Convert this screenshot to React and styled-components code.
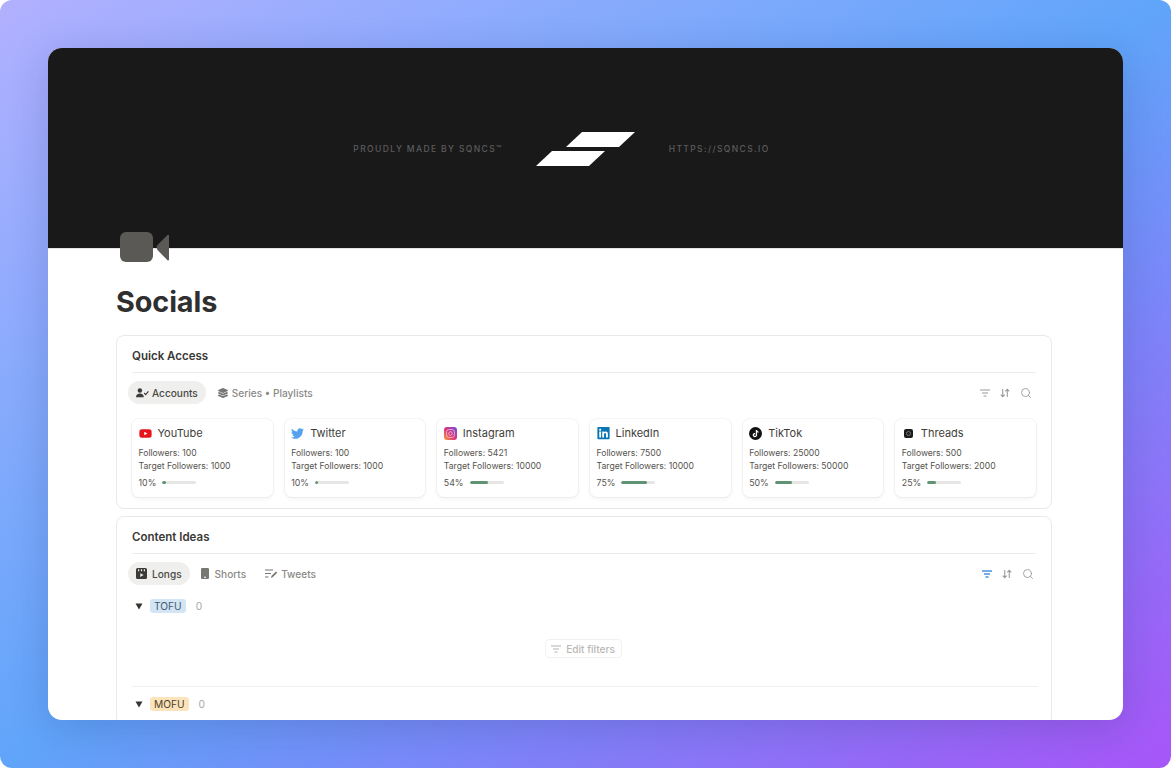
import React from "react";
import styled, { createGlobalStyle } from "styled-components";
import { FaYoutube, FaTwitter, FaLinkedin, FaLayerGroup } from "react-icons/fa";
import { Search } from "lucide-react";

const Global = createGlobalStyle`
  html, body { margin: 0; padding: 0; background: #fff; }
  * { box-sizing: border-box; }
  body { font-family: Inter, "Noto Sans", sans-serif; color: #37352f; }
`;

const Backdrop = styled.div`
  width: 1171px; height: 768px; padding: 48px; border-radius: 12px; overflow: hidden;
  background: linear-gradient(to bottom right, #b2b0ff 0%, #60a5fa 50%, #a855f7 100%);
`;
const Window = styled.main`
  width: 1075px; height: 672px; background: #fff; border-radius: 14px; overflow: hidden;
  box-shadow: 0 8px 40px rgba(30, 30, 90, .18);
`;
const Banner = styled.header`
  height: 201px; background: #191919; display: flex; align-items: center; justify-content: center; gap: 33px;
  padding: 2px 48px 0 0; border-bottom: 1px solid #e4e4e4;
`;
const BannerText = styled.span`
  font-size: 8.5px; letter-spacing: 1.38px; color: #5c5c5c; font-weight: 500; white-space: nowrap;
`;
const BannerLogo = styled.svg`
  display: block; width: 100px; height: 35px; flex: none;
`;
const Body = styled.div`
  padding: 0 71px 0 68px;
`;
const PageIcon = styled.svg`
  display: block; width: 50px; height: 32px; margin: -17px 0 0 4px; position: relative;
`;
const Title = styled.h1`
  margin: 20px 0 15px; font-size: 28.8px; line-height: 36px; font-weight: 700; color: #2f2f2f; letter-spacing: -.1px;
`;
const Panel = styled.section`
  border: 1px solid #e9e9e7; border-radius: 8px; padding: 0 15px 11px; margin-bottom: 7px; background: #fff;
`;
const PanelTitle = styled.h2`
  margin: 0; height: 37px; border-bottom: 1px solid #ebebea; display: flex; align-items: center; padding: 3px 0 0 0;
  font-size: 11.5px; font-weight: 600; color: #3a3936;
`;
const TabBar = styled.div`
  display: flex; align-items: center; justify-content: space-between; height: 23px; margin: 8px 0 0 -4px;
`;
const Tabs = styled.div`
  display: flex; align-items: center; gap: ${p => p.$gap}px;
`;
const Tab = styled.div`
  display: flex; align-items: center; gap: ${p => p.$iconGap || 4}px; height: 23px; padding: 0 8px; border-radius: 12px;
  font-size: 10.1px; font-weight: 500; color: ${p => p.$active ? "#4a4945" : "#8b8a86"};
  background: ${p => p.$active ? "#efefee" : "transparent"}; white-space: nowrap;
  svg { flex: none; color: ${p => p.$active ? "#3c3b37" : "#777672"}; }
`;
const Tools = styled.div`
  display: flex; align-items: center; gap: 10px; margin-right: ${p => p.$right}px; color: #9b9a97;
`;
const Cards = styled.div`
  display: grid; grid-template-columns: repeat(6, 1fr); gap: 12px; margin-top: 15px;
`;
const Card = styled.article`
  height: 78px; border-radius: 7px; background: #fff; padding: 6px 6.5px 0;
  box-shadow: 0 0 0 1px rgba(15, 15, 15, .04), 0 2px 4px rgba(15, 15, 15, .05);
`;
const CardHead = styled.div`
  display: flex; align-items: center; gap: 6px; height: 16px; font-size: 11px; font-weight: 400; color: #3f3e3a;
`;
const LogoBox = styled.span`
  width: 13px; height: 13px; display: flex; align-items: center; justify-content: center; flex: none;
`;
const Stats = styled.div`
  margin-top: 6px;
`;
const Stat = styled.div`
  font-size: 8.65px; line-height: 13px; color: #55534e; white-space: nowrap;
`;
const ProgressRow = styled.div`
  display: flex; align-items: center; gap: 6px; margin-top: 3px; height: 13px; font-size: 8.8px; color: #55534e;
`;
const Track = styled.div`
  width: 34px; height: 3px; border-radius: 2px; background: #e6e6e4; overflow: hidden;
`;
const Fill = styled.div`
  height: 100%; background: #5f9373; border-radius: 2px;
`;
const GroupRow = styled.div`
  display: flex; align-items: center; height: 20px; margin: ${p => p.$top}px 0 0 3px; font-size: 10.2px;
`;
const Caret = styled.svg`
  width: 8px; height: 7px; margin-right: 7px; flex: none;
`;
const Tag = styled.span`
  background: ${p => p.$bg}; color: ${p => p.$fg}; border-radius: 3px; padding: 0 4px; height: 14px; line-height: 14px;
  font-size: 10.2px; font-weight: 400;
`;
const Count = styled.span`
  margin-left: 10px; color: #a9a8a5; font-size: 10.2px;
`;
const EmptyState = styled.div`
  display: flex; justify-content: center; padding: 23px 0 28px; border-bottom: 1px solid #f0f0ef; margin-right: -2px;
`;
const EditFilters = styled.div`
  display: flex; align-items: center; gap: 5px; height: 19px; padding: 0 6px 0 5px; margin-left: -3px; border: 1px solid #f2f2f1; border-radius: 4px;
  font-size: 10.1px; color: #b9b8b5; font-weight: 500; svg { color: #b5b4b1; }
`;

const FilterIcon = ({ color = "currentColor", weight = 1.15 }) => (
  <svg width="10" height="8" viewBox="0 0 10 8" fill="none" stroke={color} strokeWidth={weight}>
    <path d="M0 1h10M2 4h6M3.500 7h3" />
  </svg>
);
const SortIcon = () => (
  <svg width="10" height="10" viewBox="0 0 11 10" fill="none" stroke="currentColor" strokeWidth="1.200">
    <path d="M3 .5v8.500M.8 6.800 3 9l2.200-2.200M8 9.500V1M5.800 3.200 8 1l2.200 2.200" />
  </svg>
);
const Tooling = ({ active, right }) => (
  <Tools $right={right}>
    <FilterIcon color={active ? "#4a90e2" : "currentColor"} weight={active ? 1.5 : 1.15} />
    <SortIcon />
    <Search size={12} strokeWidth={1.8} />
  </Tools>
);

const AccountsIcon = () => (
  <svg width="13" height="10" viewBox="0 0 14 10" fill="currentColor">
    <circle cx="4.200" cy="2.400" r="2.400" />
    <path d="M0 9.500C0 7 1.800 5.600 4.200 5.600S8.400 7 8.400 9.500z" />
    <path d="m8.800 5 1.600 1.700L13.400 3.300" fill="none" stroke="currentColor" strokeWidth="1.200" />
  </svg>
);
const ClapperIcon = () => (
  <svg width="11" height="11" viewBox="0 0 11 11" fill="currentColor">
    <path fillRule="evenodd" d="M1.500 0h8A1.500 1.500 0 0 1 11 1.500v8A1.500 1.500 0 0 1 9.500 11h-8A1.500 1.500 0 0 1 0 9.500v-8A1.500 1.500 0 0 1 1.500 0zM2 1.200v2h1.200v-2zM4.900 1.200v2h1.200v-2zM7.800 1.200v2H9v-2zM4.300 5.200v3.800l3.300-1.900z" />
  </svg>
);
const PhoneIcon = () => (
  <svg width="8" height="11" viewBox="0 0 8 11" fill="currentColor">
    <path fillRule="evenodd" d="M1.300 0h5.400C7.400 0 8 .6 8 1.300v8.400c0 .7-.6 1.300-1.300 1.300H1.300C.6 11 0 10.400 0 9.700V1.300C0 .6.600 0 1.300 0zM3 8.800v1h2v-1z" />
  </svg>
);
const TweetsIcon = () => (
  <svg width="13" height="10" viewBox="0 0 13 10" fill="none" stroke="currentColor" strokeWidth="1.100">
    <path d="M0 1h8M0 4.500h6M0 8h3.500" />
    <path d="m6 8.800.4-1.700L11 2.500l1.200 1.200L7.700 8.300z" fill="currentColor" stroke="none" />
  </svg>
);
const InstaIcon = () => (
  <svg width="13" height="13" viewBox="0 0 13 13">
    <defs>
      <linearGradient id="ig" x1="0" y1="1" x2="1" y2="0">
        <stop offset="0" stopColor="#f9a03c" />
        <stop offset=".45" stopColor="#e0367a" />
        <stop offset="1" stopColor="#6a4de0" />
      </linearGradient>
    </defs>
    <rect width="13" height="13" rx="3" fill="url(#ig)" />
    <rect x="2.600" y="2.600" width="7.800" height="7.800" rx="2.200" fill="none" stroke="#fff" strokeOpacity=".6" strokeWidth=".9" />
    <circle cx="6.500" cy="6.500" r="1.800" fill="none" stroke="#fff" strokeOpacity=".6" strokeWidth=".9" />
  </svg>
);
const TikTokIcon = () => (
  <svg width="13" height="13" viewBox="0 0 13 13">
    <circle cx="6.500" cy="6.500" r="6.500" fill="#111" />
    <path d="M6.800 2.900h1.300c.1.900.6 1.500 1.500 1.600v1.300c-.6 0-1.100-.2-1.500-.5v2.700c0 1.400-1 2.200-2.200 2.200S3.700 9.300 3.700 8.100c0-1.300 1.100-2.300 2.400-2.100v1.300c-.6-.1-1.100.2-1.100.8s.4.900.9.900.9-.4.900-1z" fill="#fff" />
  </svg>
);
const ThreadsIcon = () => (
  <svg width="9" height="9" viewBox="0 0 9 9">
    <rect width="9" height="9" rx="2" fill="#1c1c1c" />
    <circle cx="4.500" cy="4.500" r="2" fill="none" stroke="#8a8a8a" strokeWidth=".8" />
  </svg>
);
const CaretIcon = () => (
  <Caret viewBox="0 0 8 7" fill="#37352f"><polygon points="0.500,0.500 7.500,0.500 4,6.500" /></Caret>
);

const accounts = [
  { name: "YouTube", logo: <FaYoutube size={13} color="#e5141d" />, followers: 100, target: 1000, pct: 10 },
  { name: "Twitter", logo: <FaTwitter size={13} color="#55a3ee" />, followers: 100, target: 1000, pct: 10 },
  { name: "Instagram", logo: <InstaIcon />, followers: 5421, target: 10000, pct: 54 },
  { name: "LinkedIn", logo: <FaLinkedin size={14} color="#0a76b4" />, followers: 7500, target: 10000, pct: 75 },
  { name: "TikTok", logo: <TikTokIcon />, followers: 25000, target: 50000, pct: 50 },
  { name: "Threads", logo: <ThreadsIcon />, followers: 500, target: 2000, pct: 25 },
];

export default function App() {
  return (
    <Backdrop>
      <Global />
      <Window>
        <Banner>
          <BannerText>PROUDLY MADE BY SQNCS™</BannerText>
          <BannerLogo viewBox="0 0 100 35" fill="#fff">
            <polygon points="30,15 46,0 99,0 83,15" />
            <polygon points="0,34 16,19 69,19 53,34" />
          </BannerLogo>
          <BannerText>HTTPS://SQNCS.IO</BannerText>
        </Banner>
        <Body>
          <PageIcon viewBox="0 0 50 32" fill="#5a5955">
            <rect x="0" y="0" width="33" height="30" rx="6" />
            <path d="M49 3.500v24c0 1-.7 1.300-1.500.8L38 18.500c-1.800-1.800-1.800-4.200 0-6l9.500-9.600c.8-.5 1.500-.2 1.500.6z" />
          </PageIcon>
          <Title>Socials</Title>
          <Panel>
            <PanelTitle>Quick Access</PanelTitle>
            <TabBar>
              <Tabs $gap={4}>
                <Tab $active $iconGap={3}><AccountsIcon />Accounts</Tab>
                <Tab><FaLayerGroup size={10} />Series • Playlists</Tab>
              </Tabs>
              <Tooling right={4} />
            </TabBar>
            <Cards>
              {accounts.map(a => (
                <Card key={a.name}>
                  <CardHead><LogoBox>{a.logo}</LogoBox>{a.name}</CardHead>
                  <Stats>
                    <Stat>Followers: {a.followers}</Stat>
                    <Stat>Target Followers: {a.target}</Stat>
                  </Stats>
                  <ProgressRow>
                    {a.pct}%
                    <Track><Fill style={{ width: `${a.pct}%` }} /></Track>
                  </ProgressRow>
                </Card>
              ))}
            </Cards>
          </Panel>
          <Panel>
            <PanelTitle>Content Ideas</PanelTitle>
            <TabBar>
              <Tabs $gap={3}>
                <Tab $active $iconGap={5}><ClapperIcon />Longs</Tab>
                <Tab $iconGap={6}><PhoneIcon />Shorts</Tab>
                <Tab $iconGap={3}><TweetsIcon />Tweets</Tab>
              </Tabs>
              <Tooling active right={2} />
            </TabBar>
            <GroupRow $top={11}><CaretIcon /><Tag $bg="#d3e5f5" $fg="#3f5a70">TOFU</Tag><Count>0</Count></GroupRow>
            <EmptyState>
              <EditFilters><FilterIcon />Edit filters</EditFilters>
            </EmptyState>
            <GroupRow $top={7}><CaretIcon /><Tag $bg="#fbe4bb" $fg="#4f4028">MOFU</Tag><Count>0</Count></GroupRow>
          </Panel>
        </Body>
      </Window>
    </Backdrop>
  );
}
